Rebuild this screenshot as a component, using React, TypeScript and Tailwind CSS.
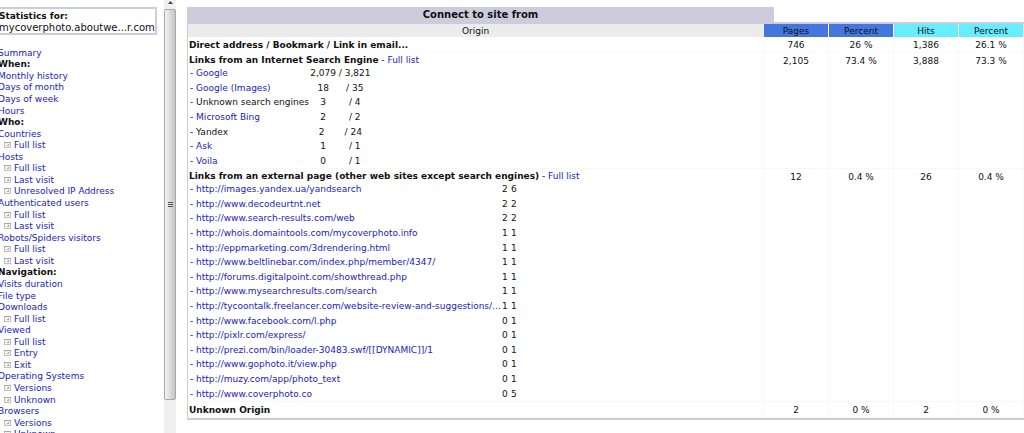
import type { ReactNode } from 'react';

type NavItem = { label: string; kind: 'title' | 'link' | 'sub' };

const title = (label: string): NavItem => ({ label, kind: 'title' });
const link = (label: string): NavItem => ({ label, kind: 'link' });
const sub = (label: string): NavItem => ({ label, kind: 'sub' });

const navItems: NavItem[] = [
  link('Summary'),
  title('When:'),
  link('Monthly history'),
  link('Days of month'),
  link('Days of week'),
  link('Hours'),
  title('Who:'),
  link('Countries'),
  sub('Full list'),
  link('Hosts'),
  sub('Full list'),
  sub('Last visit'),
  sub('Unresolved IP Address'),
  link('Authenticated users'),
  sub('Full list'),
  sub('Last visit'),
  link('Robots/Spiders visitors'),
  sub('Full list'),
  sub('Last visit'),
  title('Navigation:'),
  link('Visits duration'),
  link('File type'),
  link('Downloads'),
  sub('Full list'),
  link('Viewed'),
  sub('Full list'),
  sub('Entry'),
  sub('Exit'),
  link('Operating Systems'),
  sub('Versions'),
  sub('Unknown'),
  link('Browsers'),
  sub('Versions'),
  sub('Unknown'),
];

const engines = [
  { name: 'Google', linked: true, count: '2,079 / 3,821' },
  { name: 'Google (Images)', linked: true, count: '18      / 35' },
  { name: 'Unknown search engines', linked: false, count: '3        / 4' },
  { name: 'Microsoft Bing', linked: true, count: '2        / 2' },
  { name: 'Yandex', linked: false, count: '2       / 24' },
  { name: 'Ask', linked: true, count: '1        / 1' },
  { name: 'Voila', linked: true, count: '0        / 1' },
];

const pages: [string, number, number][] = [
  ['http://images.yandex.ua/yandsearch', 2, 6],
  ['http://www.decodeurtnt.net', 2, 2],
  ['http://www.search-results.com/web', 2, 2],
  ['http://whois.domaintools.com/mycoverphoto.info', 1, 1],
  ['http://eppmarketing.com/3drendering.html', 1, 1],
  ['http://www.beltlinebar.com/index.php/member/4347/', 1, 1],
  ['http://forums.digitalpoint.com/showthread.php', 1, 1],
  ['http://www.mysearchresults.com/search', 1, 1],
  ['http://tycoontalk.freelancer.com/website-review-and-suggestions/...', 1, 1],
  ['http://www.facebook.com/l.php', 0, 1],
  ['http://pixlr.com/express/', 0, 1],
  ['http://prezi.com/bin/loader-30483.swf/[[DYNAMIC]]/1', 0, 1],
  ['http://www.gophoto.it/view.php', 0, 1],
  ['http://muzy.com/app/photo_text', 0, 1],
  ['http://www.coverphoto.co', 0, 5],
];

function Anchor({ children }: { children: ReactNode }) {
  return (
    <a href="#" className="text-[#2222b8] hover:underline">
      {children}
    </a>
  );
}

function PageIcon() {
  return (
    <svg viewBox="0 0 7 6" className="h-1.5 w-[7px] shrink-0" aria-hidden="true" shapeRendering="crispEdges">
      <rect width="7" height="6" fill="#c0c0bc" />
      <rect x="1" y="1" width="5" height="4" fill="#f2f2ee" />
      <path d="M0 0h7v1H0z" fill="#a8a8a4" />
      <path d="M3 3h2v1H3zM4 2h1v2H4z" fill="#a9b0a4" />
    </svg>
  );
}

function Sidebar() {
  return (
    <aside className="w-[164px] shrink-0 overflow-hidden pt-[7px]">
      <div className="mr-[7px] border-2 border-l-0 border-[#ccccdd] pt-0.5 whitespace-nowrap">
        <div className="-ml-px text-[9px] leading-[11px] font-bold">Statistics for:</div>
        <div className="-ml-px text-[10px] leading-[11px]">mycoverphoto.aboutwe...r.com</div>
      </div>
      <nav className="mt-3">
        <ul className="grid h-[393px] auto-rows-fr">
          {navItems.map((item, i) => (
            <li
              key={i}
              className={
                item.kind === 'sub' ? 'flex items-center gap-[3px] pl-1' : '-ml-0.5 flex items-center'
              }
            >
              {item.kind === 'sub' && <PageIcon />}
              {item.kind === 'title' ? <b>{item.label}</b> : <Anchor>{item.label}</Anchor>}
            </li>
          ))}
        </ul>
      </nav>
    </aside>
  );
}

function ScrollBar() {
  return (
    <div className="flex w-3 shrink-0 flex-col bg-[#f0f0f0]" aria-hidden="true">
      <div className="flex h-[9px] justify-center pt-px">
        <svg viewBox="0 0 5 3" className="h-[3px] w-[5px]">
          <path d="M2.5 0L5 3H0z" fill="#444" />
        </svg>
      </div>
      <div className="flex h-[391px] items-center justify-center rounded-xs border border-[#a8a8a8] bg-linear-to-r from-[#f3f3f3] via-[#dcdcde] to-[#c4c4c8]">
        <div className="grid w-[5px] gap-px">
          <span className="h-px bg-[#555]" />
          <span className="h-px bg-[#555]" />
          <span className="h-px bg-[#555]" />
        </div>
      </div>
    </div>
  );
}

function Values({ values }: { values: string[] }) {
  return (
    <>
      {values.map((value, i) => (
        <td key={i} className="border-r border-b border-[#f8f8f8] pt-0.5 text-center align-top">
          {value}
        </td>
      ))}
    </>
  );
}

const originCell = 'border-r border-b border-[#f8f8f8] px-px pt-px align-top';
const singleLineCell = 'border-r border-b border-[#f8f8f8] px-px pt-0.5 align-top';

export default function App() {
  return (
    <div className="flex h-screen overflow-hidden bg-white font-['DejaVu_Sans',Verdana,sans-serif] text-[9px] leading-3 text-[#111]">
      <Sidebar />
      <ScrollBar />
      <main className="min-w-0 flex-1 pt-[7px] pl-[11px]">
        <h1 className="w-[587px] bg-[#ccccdd] text-center text-[10px] leading-[15px] font-bold">
          Connect to site from
        </h1>
        <div className="border-t-2 border-b-2 border-l border-[#ccccdd]">
          <table className="w-full table-fixed border-separate border-spacing-0">
            <colgroup>
              <col />
              <col className="w-[65px]" />
              <col className="w-[65px]" />
              <col className="w-[65px]" />
              <col className="w-[65px]" />
            </colgroup>
            <thead>
              <tr className="h-[13px]">
                <th className="border-r border-[#ececec] bg-[#ececec] font-normal">Origin</th>
                <th className="border-r border-white bg-[#4477dd] font-normal">Pages</th>
                <th className="border-r border-white bg-[#4477dd] font-normal">Percent</th>
                <th className="border-r border-white bg-[#66eeff] font-normal">Hits</th>
                <th className="border-r border-white bg-[#66eeff] font-normal">Percent</th>
              </tr>
            </thead>
            <tbody>
              <tr className="h-4">
                <td className={singleLineCell}>
                  <b>Direct address / Bookmark / Link in email...</b>
                </td>
                <Values values={['746', '26 %', '1,386', '26.1 %']} />
              </tr>
              <tr>
                <td className={originCell}>
                  <b>Links from an Internet Search Engine</b> - <Anchor>Full list</Anchor>
                  <table className="h-[102px] border-separate border-spacing-0">
                    <tbody>
                      {engines.map((e) => (
                        <tr key={e.name}>
                          <td className="w-[117px] pl-px whitespace-nowrap">
                            - {e.linked ? <Anchor>{e.name}</Anchor> : e.name}
                          </td>
                          <td className="w-[63px] text-center whitespace-pre">{e.count}</td>
                        </tr>
                      ))}
                    </tbody>
                  </table>
                </td>
                <Values values={['2,105', '73.4 %', '3,888', '73.3 %']} />
              </tr>
              <tr>
                <td className={originCell}>
                  <b>Links from an external page (other web sites except search engines)</b> -{' '}
                  <Anchor>Full list</Anchor>
                  <table className="h-[219px] border-separate border-spacing-0">
                    <tbody>
                      {pages.map(([url, p, h]) => (
                        <tr key={url}>
                          <td className="w-[313px] pl-px whitespace-nowrap">
                            - <Anchor>{url}</Anchor>
                          </td>
                          <td className="w-[9px]">{p}</td>
                          <td>{h}</td>
                        </tr>
                      ))}
                    </tbody>
                  </table>
                </td>
                <Values values={['12', '0.4 %', '26', '0.4 %']} />
              </tr>
              <tr className="h-4">
                <td className={singleLineCell}>
                  <b>Unknown Origin</b>
                </td>
                <Values values={['2', '0 %', '2', '0 %']} />
              </tr>
            </tbody>
          </table>
        </div>
      </main>
    </div>
  );
}
